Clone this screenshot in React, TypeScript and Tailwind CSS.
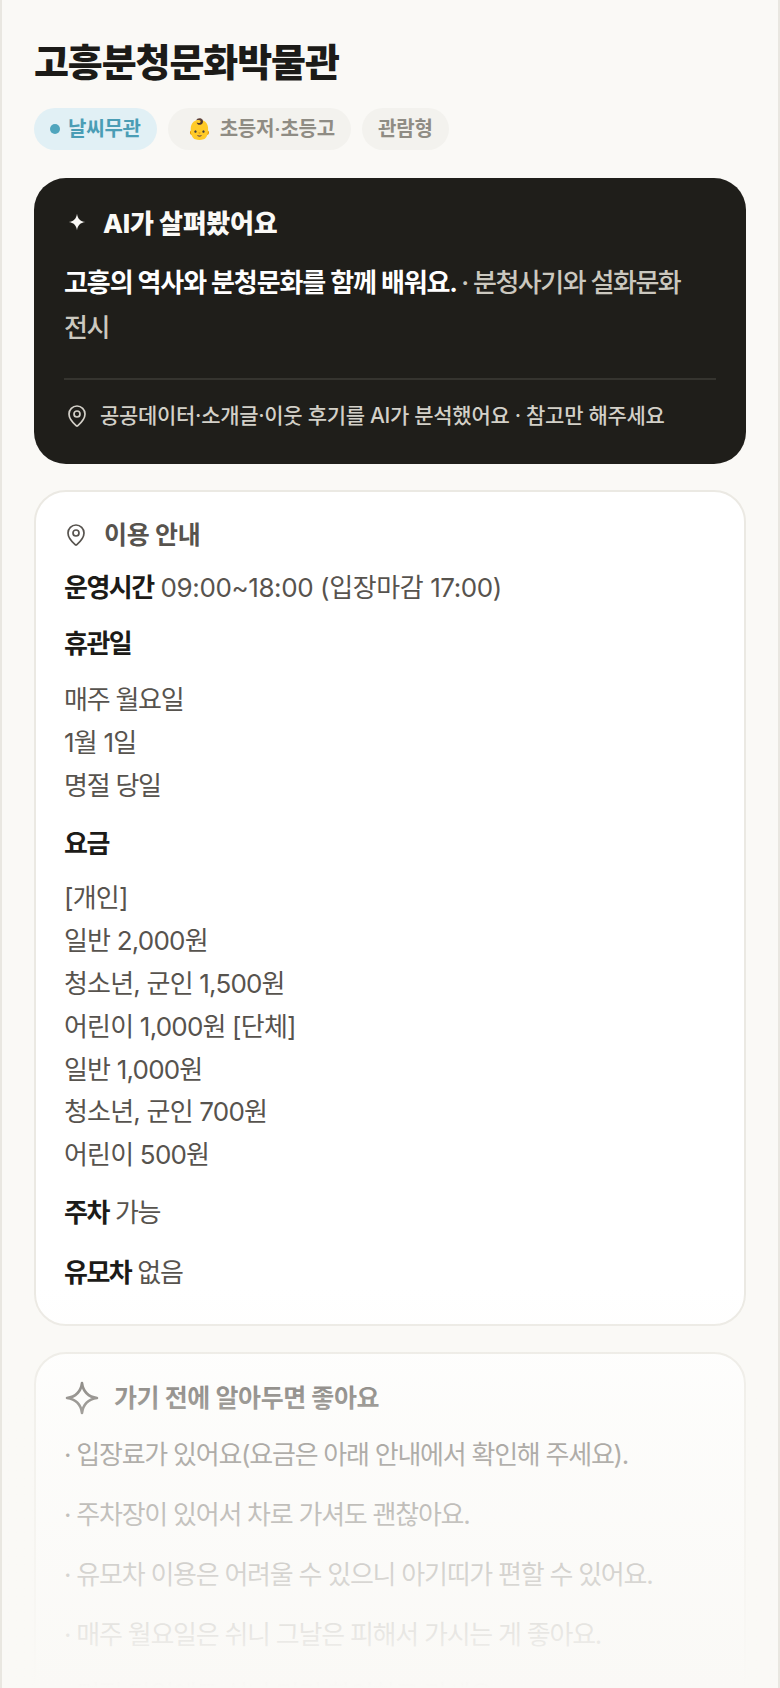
import React from "react";

const font = { fontFamily: 'Inter, "Noto Sans CJK KR", sans-serif' };

function Pin({ className }: { className: string }) {
  return (
    <svg viewBox="0 0 24 24" fill="none" stroke="currentColor" strokeWidth="1.700" strokeLinecap="round" strokeLinejoin="round" className={className}>
      <path d="M20 10c0 5-5.500 10.200-7.400 11.800a1 1 0 0 1-1.200 0C9.500 20.200 4 15 4 10a8 8 0 0 1 16 0" />
      <circle cx="12" cy="10" r="3" />
    </svg>
  );
}

function Sparkle({ className, filled }: { className: string; filled?: boolean }) {
  return (
    <svg viewBox="0 0 24 24" className={className} fill={filled ? "currentColor" : "none"} stroke={filled ? "none" : "currentColor"} strokeWidth={filled ? 0 : 1.7} strokeLinejoin="round">
      <path d="M12 2 C12.800 8 16 11.200 22 12 C16 12.800 12.800 16 12 22 C11.200 16 8 12.800 2 12 C8 11.200 11.200 8 12 2Z" />
    </svg>
  );
}

function Line({ text, tight }: { text: string; tight?: boolean }) {
  return tight ? <p className="tracking-[-1.250px]">{text}</p> : <p className="tracking-[-0.800px]">{text}</p>;
}

export default function App() {
  return (
    <div style={font} className="relative h-[1688px] overflow-hidden bg-[#faf9f6] border-x-2 border-[#e9e7e1]">
      <div className="px-[32px] pt-[37px]">
        <h1 className="text-[38px] leading-[50px] font-extrabold tracking-[-1.100px] text-[#1c1b18]">고흥분청문화박물관</h1>
        <div className="mt-[21px] flex gap-[11px] text-[20px] font-semibold tracking-[-0.200px]">
          <span className="h-[42px] flex items-center gap-[8px] rounded-full bg-[#e1f0f5] px-[16px] text-[#4a9db5]">
            <span className="w-[10px] h-[10px] rounded-full bg-[#4fa5bd]" />
            날씨무관
          </span>
          <span className="h-[42px] flex items-center gap-[8px] rounded-full bg-[#f3f2ee] pl-[19px] pr-[16px] text-[#8f8c84]">
            <span className="text-[20px]">👶</span>
            초등저·초등고
          </span>
          <span className="h-[42px] flex items-center rounded-full bg-[#f3f2ee] px-[16px] text-[#8f8c84]">관람형</span>
        </div>

        <section className="mt-[28px] rounded-[32px] bg-[#1f1e1a] px-[30px] pt-[28px] pb-[32px]">
          <div className="flex items-center gap-[16px] text-[26px] leading-[36px] font-extrabold tracking-[-0.260px] text-[#faf9f6]">
            <Sparkle filled className="w-[20px] h-[20px] ml-[3px] mb-[4px]" />
            AI가 살펴봤어요
          </div>
          <p className="mt-[18px] text-[26px] leading-[45px] tracking-[-1.500px] font-medium text-[#cbc8bf] break-keep">
            <b className="font-bold tracking-[-1.100px] text-white">고흥의 역사와 분청문화를 함께 배워요. </b>· 분청사기와 설화문화 전시
          </p>
          <div className="mt-[28px] h-[2px] bg-[#35342f]" />
          <div className="mt-[20px] flex items-center gap-[11px] text-[21px] leading-[32px] font-medium tracking-[-0.300px] text-[#d3d0c8]">
            <Pin className="w-[24px] h-[24px] ml-px" />
            공공데이터·소개글·이웃 후기를 AI가 분석했어요 · 참고만 해주세요
          </div>
        </section>

        <section className="mt-[26px] rounded-[32px] border-2 border-[#ebe9e3] bg-white px-[28px] pt-[25px] pb-[30px]">
          <div className="flex items-center gap-[16px] text-[25px] leading-[36px] font-bold tracking-[-0.300px] text-[#57534e]">
            <Pin className="w-[24px] h-[24px]" />
            이용 안내
          </div>
          <p className="mt-[14px] text-[26px] leading-[42px] tracking-[-0.400px] text-[#57534e]">
            <b className="font-bold tracking-[-1.500px] text-[#1c1b18]">운영시간</b> 09:00~18:00 (입장마감 17:00)
          </p>
          <p className="mt-[14px] text-[26px] leading-[42px] font-bold tracking-[-1.500px] text-[#1c1b18]">휴관일</p>
          <div className="mt-[14px] text-[26px] leading-[42.800px] text-[#57534e]">
            <Line tight text="매주 월요일" />
            <Line text="1월 1일" />
            <Line tight text="명절 당일" />
          </div>
          <p className="mt-[16px] text-[26px] leading-[42px] font-bold tracking-[-1.500px] text-[#1c1b18]">요금</p>
          <div className="mt-[12px] text-[26px] leading-[42.800px] text-[#57534e]">
            <Line text="[개인]" />
            <Line text="일반 2,000원" />
            <Line text="청소년, 군인 1,500원" />
            <Line text="어린이 1,000원 [단체]" />
            <Line text="일반 1,000원" />
            <Line text="청소년, 군인 700원" />
            <Line text="어린이 500원" />
          </div>
          <p className="mt-[15px] text-[26px] leading-[42px] tracking-[-1.250px] text-[#57534e]">
            <b className="font-bold tracking-[-1.500px] text-[#1c1b18]">주차</b> 가능
          </p>
          <p className="mt-[18px] text-[26px] leading-[42px] tracking-[-1.250px] text-[#57534e]">
            <b className="font-bold tracking-[-1.500px] text-[#1c1b18]">유모차</b> 없음
          </p>
        </section>

        <section className="mt-[26px] rounded-[32px] border-2 border-[#ebe9e3] bg-white px-[28px] pt-[26px] pb-[22px]">
          <div className="flex items-center gap-[14px] text-[25px] leading-[36px] font-bold tracking-[-0.400px] text-[#57534e]">
            <Sparkle className="w-[36px] h-[36px]" />
            가기 전에 알아두면 좋아요
          </div>
          <div className="mt-[18px] flex flex-col gap-[18px] text-[26px] leading-[42px] tracking-[-1.250px] text-[#57534e]">
            <p>· 입장료가 있어요(요금은 아래 안내에서 확인해 주세요).</p>
            <p>· 주차장이 있어서 차로 가셔도 괜찮아요.</p>
            <p>· 유모차 이용은 어려울 수 있으니 아기띠가 편할 수 있어요.</p>
            <p>· 매주 월요일은 쉬니 그날은 피해서 가시는 게 좋아요.</p>
            <p>· 명절 당일에도 쉬니 미리 확인하고 가세요.</p>
          </div>
        </section>
      </div>
      <div className="absolute inset-x-0 bottom-0 h-[400px] bg-gradient-to-b from-[#faf9f6]/0 via-[#faf9f6]/45 via-30% to-[#faf9f6]" />
    </div>
  );
}
